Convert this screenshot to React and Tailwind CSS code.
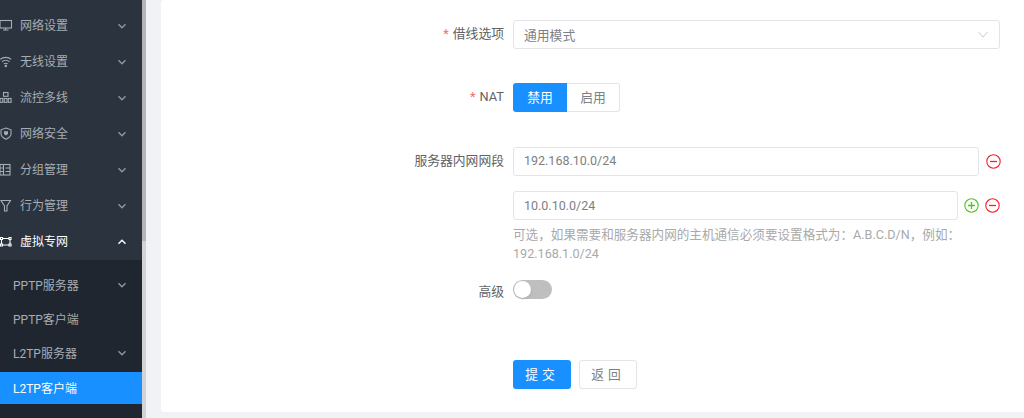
import React from "react";

const FONT = "[font-family:Roboto,'Noto_Sans_CJK_SC',sans-serif]";

const Chevron = ({ up, cls }) => (
  <svg width="10" height="10" viewBox="0 0 10 10" fill="none" stroke="currentColor" strokeWidth="1.4" className={cls}>
    <path d={up ? "M1.5 6.8 5 3.3l3.5 3.5" : "M1.5 3.3 5 6.8l3.5-3.5"} />
  </svg>
);

const icons = {
  monitor: <><rect x="0" y="1.5" width="11.500" height="7.500" /><path d="M5.500 9v1.800M3 11h5.500" /></>,
  wifi: <><path d="M.3 4.300c3-2.600 8-2.600 11 0M2 6.700c2.200-1.700 5.300-1.700 7.500 0M3.800 8.900c1.100-.7 2.800-.7 3.900 0" /><circle cx="5.800" cy="11" r=".7" fill="currentColor" /></>,
  net: <><rect x="3.500" y="1.500" width="4.500" height="3.800" /><rect x="0" y="7.500" width="2.800" height="3.800" /><rect x="4.200" y="7.500" width="2.800" height="3.800" /><rect x="8.300" y="7.500" width="2.800" height="3.800" /></>,
  shield: <><path d="M6 1 11 2.800v4c0 2.600-2.200 4.200-5 5.400-2.800-1.200-5-2.800-5-5.400v-4z" /><path d="M4 4.300h4v2.600L6 8.600 4 6.900z" fill="currentColor" stroke="none" /></>,
  list: <><rect x="0" y="1.500" width="10" height="10.500" /><path d="M0 5h3.500M0 8.500h3.500M3.500 1.500v10.500M5.500 5h4.500M5.500 8.500h4.500" /></>,
  funnel: <><path d="M1 1.500h9.500L7 7v5H4.500V7z" /></>,
  vpn: <><path d="M2.500 3.500h6.500M2.500 10h6.500M1.500 4.500v4.500M10 4.500v4.500" /><path d="M.5 2.500h2v2h-2zM9 2.500h2v2H9zM.5 9h2v2h-2zM9 9h2v2H9z" /></>,
};

const MenuRow = ({ icon, label, active }) => (
  <div className={`h-9 flex items-center pr-[15px] shrink-0 ${active ? "text-white" : "text-[#a6adb4]"}`}>
    <svg width="14" height="14" viewBox="0 0 14 14" fill="none" stroke="currentColor" strokeWidth="1.1" className="shrink-0">
      {icons[icon]}
    </svg>
    <span className="ml-[6px] text-xs flex-1">{label}</span>
    <Chevron up={active} cls={active ? "text-white" : "text-[#8f979f]"} />
  </div>
);

const SubRow = ({ label, arrow, selected }) => (
  <div className={`flex items-center pl-[13px] pr-[15px] text-xs shrink-0 ${selected ? "h-8 mt-[2px] mb-px bg-[#1890ff] text-white" : "h-[34px] text-[#a6adb4]"}`}>
    <span className="flex-1 pt-[2px]">{label}</span>
    {arrow && <Chevron cls="text-[#8f979f]" />}
  </div>
);

const Label = ({ star, children }) => (
  <div className="w-[343px] shrink-0 text-right text-[12.8px] text-[#606266] leading-[28px]">
    {star && <span className="text-[#f56c6c] mr-1">*</span>}
    {children}
  </div>
);

const CircleIcon = ({ plus }) => (
  <svg width="15" height="15" viewBox="0 0 15 15" fill="none" stroke={plus ? "#52c41a" : "#f5222d"} strokeWidth="1.1" className="shrink-0">
    <circle cx="7.500" cy="7.500" r="6.700" />
    <path d={plus ? "M4 7.500h7M7.500 4v7" : "M4 7.500h7"} strokeWidth="1.300" />
  </svg>
);

const inputCls = "h-[29px] border border-[#e2e4e8] rounded-[3px] bg-white px-[10px] flex items-center text-[#7c7f85]";

export default function App() {
  return (
    <div className={`w-[1024px] h-[418px] flex overflow-hidden bg-[#f0f2f5] ${FONT}`}>
      <aside className="w-[142px] h-full bg-[#2b333e] shrink-0 flex flex-col overflow-hidden pt-2">
        <MenuRow icon="monitor" label="网络设置" />
        <MenuRow icon="wifi" label="无线设置" />
        <MenuRow icon="net" label="流控多线" />
        <MenuRow icon="shield" label="网络安全" />
        <MenuRow icon="list" label="分组管理" />
        <MenuRow icon="funnel" label="行为管理" />
        <MenuRow icon="vpn" label="虚拟专网" active />
        <div className="bg-[#1f262f] flex flex-col flex-1 pt-2">
          <SubRow label="PPTP服务器" arrow />
          <SubRow label="PPTP客户端" />
          <SubRow label="L2TP服务器" arrow />
          <SubRow label="L2TP客户端" selected />
          <SubRow label="IPSec" />
        </div>
      </aside>
      <div className="w-1 h-full shrink-0 bg-[#d3d3d3] flex flex-col">
        <div className="h-[241px] bg-[#b5b5b5]" />
      </div>
      <main className="flex-1 pl-[15px] pb-[6px] min-w-0">
        <div className="h-full bg-white rounded-tl-[3px] rounded-bl-[3px] pt-5">
          <div className="flex">
            <Label star>借线选项</Label>
            <div className={`${inputCls} ml-[9px] w-[487px] justify-between pr-[11px] text-[12.8px]`}>
              <span className="pt-[2px]">通用模式</span>
              <svg width="10" height="7" viewBox="0 0 10 7" fill="none" stroke="#c8cacf" strokeWidth="1"><path d="M.5 1 5 6l4.500-5" /></svg>
            </div>
          </div>
          <div className="flex mt-[34px]">
            <Label star>NAT</Label>
            <div className="ml-[9px] flex h-[29px] text-[12.8px]">
              <div className="w-[54px] bg-[#1890ff] text-white rounded-l-[3px] flex items-center justify-center">禁用</div>
              <div className="w-[53px] border border-l-0 border-[#e2e4e8] text-[#7c7f85] rounded-r-[3px] flex items-center justify-center">启用</div>
            </div>
          </div>
          <div className="flex mt-[35px]">
            <Label>服务器内网网段</Label>
            <div className={`${inputCls} ml-[9px] w-[466px] text-[12.5px]`}>192.168.10.0/24</div>
            <div className="ml-[7px] h-[29px] flex items-center"><CircleIcon /></div>
          </div>
          <div className="flex mt-[15px]">
            <div className="w-[352px] shrink-0" />
            <div className={`${inputCls} w-[445px] text-[12.5px]`}><span className="pt-[2px]">10.0.10.0/24</span></div>
            <div className="ml-[6px] h-[29px] flex items-center gap-[6px]"><CircleIcon plus /><CircleIcon /></div>
          </div>
          <div className="ml-[352px] w-[487px] mt-[5px] text-[12.6px] leading-[19px] text-[#a9a9a9]">
            可选，如果需要和服务器内网的主机通信必须要设置格式为：A.B.C.D/N，例如：192.168.1.0/24
          </div>
          <div className="flex mt-[17px] h-[19px]">
            <div className="w-[343px] shrink-0 text-right text-[12.8px] text-[#606266] leading-[24px]">高级</div>
            <div className="ml-[9px] h-[19px] w-[39px] rounded-full bg-[#bfbfbf] relative">
              <div className="absolute left-[1px] top-[1px] w-[17px] h-[17px] rounded-full bg-white shadow" />
            </div>
          </div>
          <div className="flex ml-[352px] gap-2 mt-[61px] text-[12.8px]">
            <div className="w-[58px] h-[29px] rounded-[3px] bg-[#1890ff] text-white flex items-center justify-center tracking-[4px]">提交</div>
            <div className="w-[58px] h-[29px] rounded-[3px] border border-[#e2e4e8] text-[#7c7f85] flex items-center justify-center tracking-[4px]">返回</div>
          </div>
        </div>
      </main>
    </div>
  );
}
